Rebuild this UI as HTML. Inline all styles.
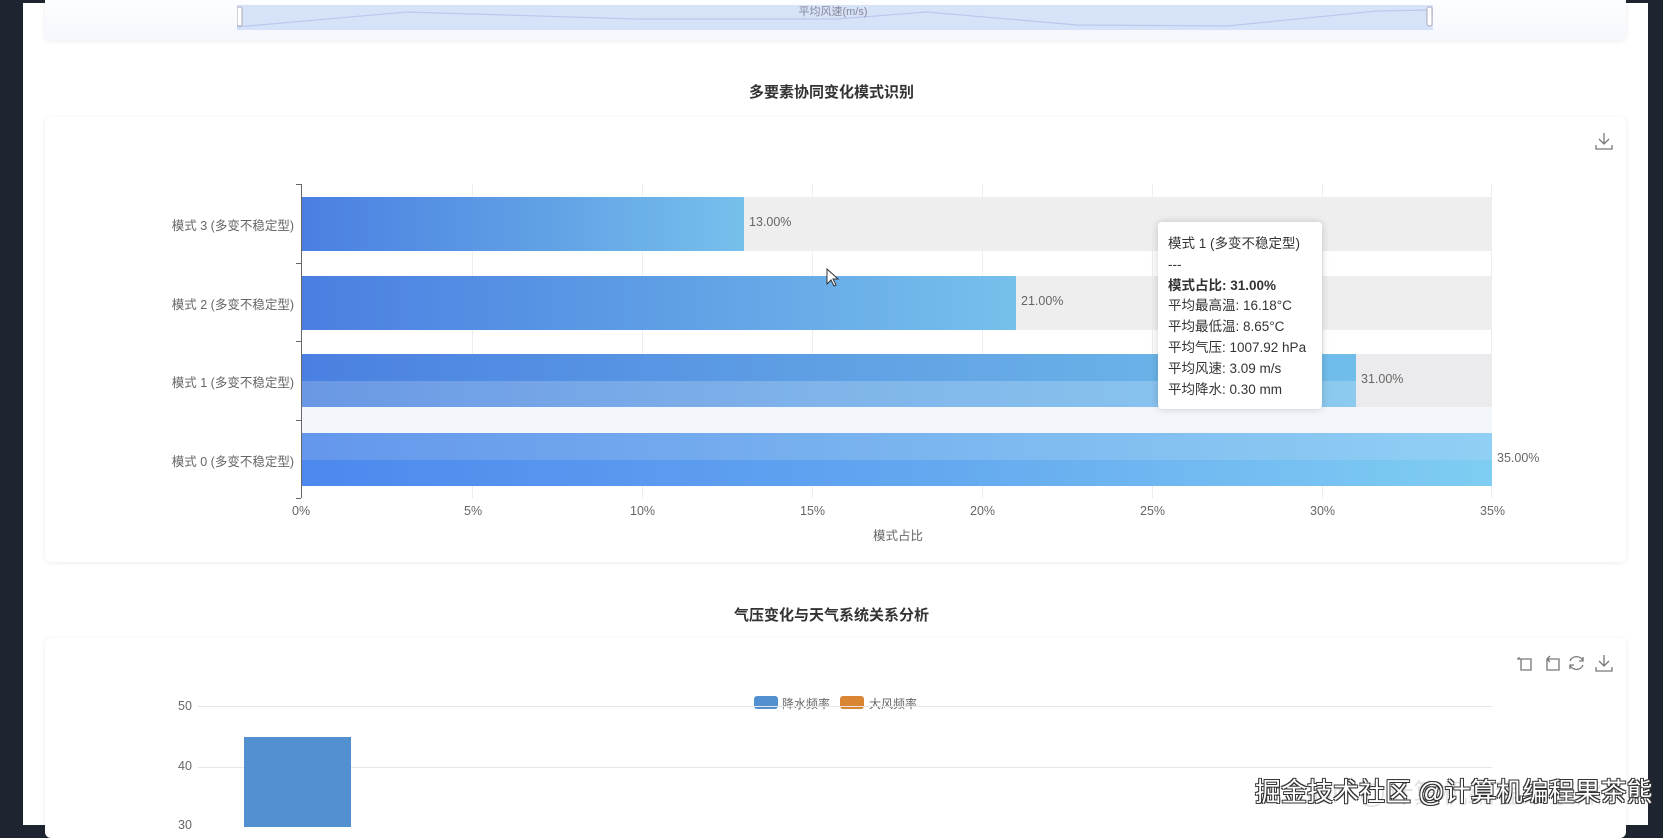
<!DOCTYPE html><html><head><meta charset="utf-8"><style>
*{margin:0;padding:0;box-sizing:border-box}
body{width:1663px;height:825px;overflow:hidden;background:#1f2530;font-family:"Liberation Sans","Noto Sans CJK SC",sans-serif;position:relative}
.main{position:absolute;left:23px;top:3px;width:1625px;height:822px;background:#fff}
.card{position:absolute;left:45px;width:1581px;background:#fff;border-radius:6px;box-shadow:0 1px 6px rgba(0,0,0,.08)}
.t{position:absolute;font-size:12.5px;color:#666;white-space:nowrap}
.h{position:absolute;width:100%;text-align:center;font-size:15px;font-weight:bold;color:#333}
.bar{position:absolute;left:302px}
</style></head><body>
<div class="main"></div>
<div style="position:absolute;left:0;top:0;width:1663px;height:3px;background:#1f2530"></div>
<!-- top card -->
<div class="card" style="top:-10px;height:50px;background:linear-gradient(#fff,#f4f7fd)"></div>
<svg style="position:absolute;left:237px;top:5px" width="1196" height="26">
<rect x="0" y="0" width="1196" height="25" fill="#d6e2f8"/>
<path d="M0 22 L170 7 L400 14 L600 14 L690 7 L840 20 L990 21 L1140 6 L1196 5" fill="none" stroke="#b9c9ee" stroke-width="1.2"/>
<rect x="0" y="2" width="5" height="19" rx="2" fill="#fff" stroke="#aab"/>
<rect x="1190" y="2" width="5" height="19" rx="2" fill="#fff" stroke="#aab"/>
<text x="596" y="10" font-size="11" fill="#889" text-anchor="middle" font-family="Liberation Sans,Noto Sans CJK SC,sans-serif">平均风速(m/s)</text>
</svg>
<div class="h" style="top:81px;left:0">多要素协同变化模式识别</div>
<!-- card 2 -->
<div class="card" style="top:117px;height:445px"></div>
<svg style="position:absolute;left:1595px;top:132px" width="18" height="18" fill="none" stroke="#777" stroke-width="1.3"><path d="M9 1V12M4 7l5 5 5-5M1 13v4h16v-4"/></svg>
<div style="position:absolute;left:302px;top:184px;width:1190px;height:314px">
 <div style="position:absolute;left:170px;top:0;width:1px;height:100%;background:#eee"></div>
 <div style="position:absolute;left:340px;top:0;width:1px;height:100%;background:#eee"></div>
 <div style="position:absolute;left:510px;top:0;width:1px;height:100%;background:#eee"></div>
 <div style="position:absolute;left:680px;top:0;width:1px;height:100%;background:#eee"></div>
 <div style="position:absolute;left:850px;top:0;width:1px;height:100%;background:#eee"></div>
 <div style="position:absolute;left:1020px;top:0;width:1px;height:100%;background:#eee"></div>
 <div style="position:absolute;left:1189px;top:0;width:1px;height:100%;background:#eee"></div>
</div>
<div style="position:absolute;left:302px;top:381px;width:1190px;height:78px;background:#f3f6fa"></div>
<div class="bar" style="top:197px;width:1190px;height:54px;background:#eeeeee"></div>
<div class="bar" style="top:276px;width:1190px;height:54px;background:#eeeeee"></div>
<div class="bar" style="top:354px;width:1190px;height:53px;background:#ebebed"></div>
<div class="bar" style="top:197px;width:442px;height:54px;background:linear-gradient(90deg,#4a7fe2,#5e9ee5 50%,#76c0ec)"></div>
<div class="bar" style="top:276px;width:714px;height:54px;background:linear-gradient(90deg,#4a7fe2,#5e9ee5 50%,#76c0ec)"></div>
<div class="bar" style="top:354px;width:1054px;height:27px;background:linear-gradient(90deg,#4a80e2,#5fa0e4 50%,#70bdea)"></div>
<div class="bar" style="top:381px;width:1054px;height:26px;background:linear-gradient(90deg,#6a98e4,#80b4ea 50%,#8ccaef)"></div>
<div class="bar" style="top:433px;width:1190px;height:27px;background:linear-gradient(90deg,#6497ec,#7ab4ef 50%,#90d0f4)"></div>
<div class="bar" style="top:460px;width:1190px;height:26px;background:linear-gradient(90deg,#4d88ee,#62a6f0 50%,#7fcdf2)"></div>
<div style="position:absolute;left:301px;top:184px;width:1px;height:314px;background:#666"></div>
<div style="position:absolute;left:296px;top:184px;width:5px;height:1px;background:#666"></div>
<div style="position:absolute;left:296px;top:263px;width:5px;height:1px;background:#666"></div>
<div style="position:absolute;left:296px;top:341px;width:5px;height:1px;background:#666"></div>
<div style="position:absolute;left:296px;top:420px;width:5px;height:1px;background:#666"></div>
<div style="position:absolute;left:296px;top:498px;width:5px;height:1px;background:#666"></div>
<div class="t" style="right:1369px;top:215px">模式 3 (多变不稳定型)</div>
<div class="t" style="right:1369px;top:294px">模式 2 (多变不稳定型)</div>
<div class="t" style="right:1369px;top:372px">模式 1 (多变不稳定型)</div>
<div class="t" style="right:1369px;top:451px">模式 0 (多变不稳定型)</div>
<div class="t" style="left:749px;top:215px">13.00%</div>
<div class="t" style="left:1021px;top:294px">21.00%</div>
<div class="t" style="left:1361px;top:372px">31.00%</div>
<div class="t" style="left:1497px;top:451px">35.00%</div>
<div class="t" style="left:292px;top:504px">0%</div>
<div class="t" style="left:464px;top:504px">5%</div>
<div class="t" style="left:630px;top:504px">10%</div>
<div class="t" style="left:800px;top:504px">15%</div>
<div class="t" style="left:970px;top:504px">20%</div>
<div class="t" style="left:1140px;top:504px">25%</div>
<div class="t" style="left:1310px;top:504px">30%</div>
<div class="t" style="left:1480px;top:504px">35%</div>
<div class="t" style="left:873px;top:525px">模式占比</div>
<div style="position:absolute;left:1158px;top:222px;width:164px;height:187px;background:#fff;border-radius:4px;box-shadow:0 0 8px rgba(0,0,0,.18);padding:12px 10px;font-size:13.5px;color:#333;line-height:20.8px;white-space:nowrap">模式 1 (多变不稳定型)<br>---<br><b>模式占比: 31.00%</b><br>平均最高温: 16.18°C<br>平均最低温: 8.65°C<br>平均气压: 1007.92 hPa<br>平均风速: 3.09 m/s<br>平均降水: 0.30 mm</div>
<svg style="position:absolute;left:826px;top:268px" width="14" height="20"><path d="M1 1v15l4-4 3 6 2-1-3-6h5z" fill="#fff" stroke="#333"/></svg>
<div class="h" style="top:604px;left:0">气压变化与天气系统关系分析</div>
<!-- card 3 -->
<div class="card" style="top:638px;height:200px"></div>
<svg style="position:absolute;left:1516px;top:654px" width="100" height="18" fill="none" stroke="#777" stroke-width="1.3">
<path d="M3 3v2M1 5h4M5 5h10v11H5z"/><path d="M31 5l3-3M31 5l3 3M31 5h12v11H31z"/>
<path d="M54 7a7 7 0 0 1 13 0M67 11a7 7 0 0 1-13 0M67 3v4h-4M54 15v-4h4"/>
<path d="M88 1v11M83 7l5 5 5-5M80 13v4h16v-4"/></svg>
<div style="position:absolute;left:754px;top:696px;width:24px;height:13px;background:#5290d0;border-radius:3px"></div>
<div class="t" style="left:782px;top:695px;font-size:12px">降水频率</div>
<div style="position:absolute;left:840px;top:696px;width:24px;height:13px;background:#d98534;border-radius:3px"></div>
<div class="t" style="left:869px;top:695px;font-size:12px">大风频率</div>
<div style="position:absolute;left:198px;top:706px;width:1294px;height:1px;background:#e6e6e6"></div>
<div style="position:absolute;left:198px;top:767px;width:1294px;height:1px;background:#e6e6e6"></div>
<div class="t" style="left:178px;top:699px">50</div>
<div class="t" style="left:178px;top:759px">40</div>
<div class="t" style="left:178px;top:818px">30</div>
<div style="position:absolute;left:244px;top:737px;width:107px;height:90px;background:#5290d0"></div>
<div style="position:absolute;left:1275px;top:772px;font-size:27px;color:rgba(160,160,160,.3);white-space:nowrap">CSDN @计算机编程果茶熊</div>
<div style="position:absolute;left:1255px;top:772px;font-size:26px;color:#fff;white-space:nowrap;text-shadow:1px 1px 0 #333,-1px -1px 0 #333,1px -1px 0 #333,-1px 1px 0 #333">掘金技术社区 @计算机编程果茶熊</div>
</body></html>
